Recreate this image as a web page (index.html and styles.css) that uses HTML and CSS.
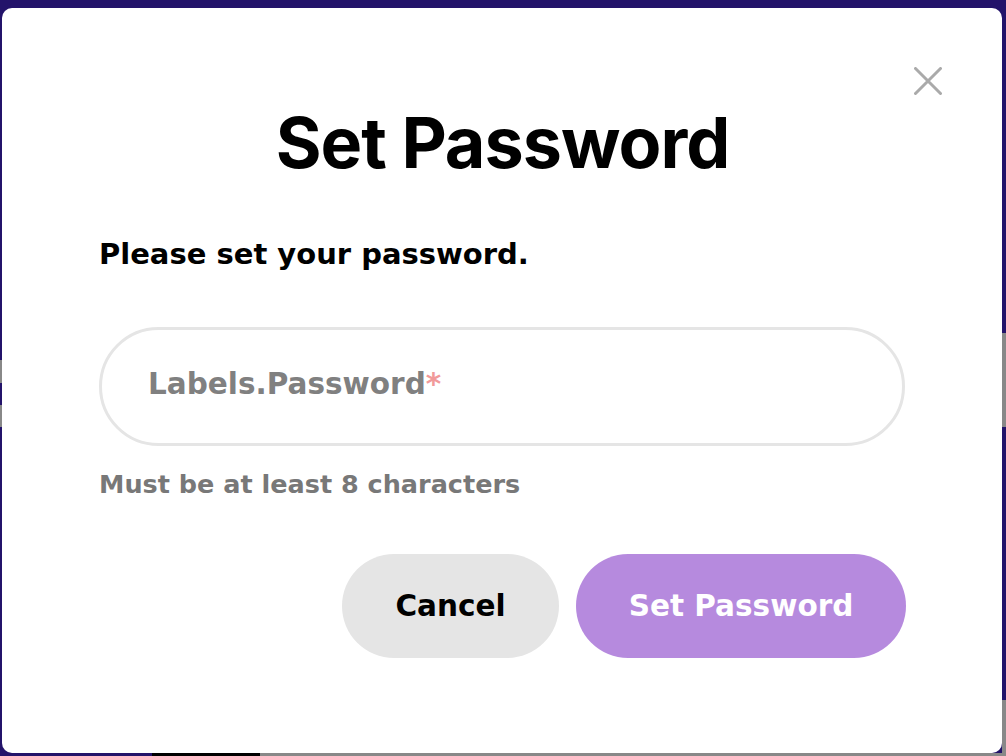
FILE: index.html
```html
<!DOCTYPE html>
<html lang="en">
<head>
<meta charset="utf-8">
<title>Set Password</title>
<link rel="stylesheet" href="styles.css">
</head>
<body>
<div class="modal" role="dialog" aria-labelledby="ttl">
  <button class="close" aria-label="Close">
    <svg width="28" height="28" viewBox="0 0 28 28"><path d="M1.5 1.5 L26.5 26.5 M26.5 1.5 L1.5 26.5" stroke="#aaaaaa" stroke-width="3" stroke-linecap="round" fill="none"/></svg>
  </button>
  <h1 class="title" id="ttl">Set Password</h1>
  <p class="lead">Please set your password.</p>
  <label class="field">
    <span class="placeholder">Labels.Password<span class="req">*</span></span>
  </label>
  <p class="hint">Must be at least 8 characters</p>
  <div class="actions">
    <button class="btn btn-cancel">Cancel</button>
    <button class="btn btn-primary">Set Password</button>
  </div>
</div>
</body>
</html>
```
FILE: styles.css
```css
* { box-sizing: border-box; }
html, body { height: 100%; }
body {
  margin: 0;
  padding: 8px 4px 3px 2px;
  font-family: "DejaVu Sans", Inter, sans-serif;
  background:
    linear-gradient(#888, #888) right 0 top 333px / 4px 94px no-repeat,
    linear-gradient(#888, #888) right 0 top 700px / 4px 56px no-repeat,
    linear-gradient(#888, #888) left 0 top 360px / 2px 23px no-repeat,
    linear-gradient(#888, #888) left 0 top 405px / 2px 22px no-repeat,
    linear-gradient(#000, #000) left 152px bottom 0 / 108px 3px no-repeat,
    linear-gradient(#888, #888) left 260px bottom 0 / 746px 3px no-repeat,
    #23136a;
  overflow: hidden;
}
.modal {
  position: relative;
  height: 745px;
  background: #fff;
  border-radius: 10px;
  padding: 100px 96px 0 97px;
  display: flex;
  flex-direction: column;
}
.close {
  position: absolute;
  top: 59px;
  right: 60px;
  width: 28px;
  height: 28px;
  padding: 0;
  border: 0;
  background: none;
  display: flex;
}
.title {
  margin: 0;
  text-align: center;
  font-family: Inter, "DejaVu Sans", sans-serif;
  font-size: 70px;
  line-height: 70px;
  font-weight: 700;
  letter-spacing: -1px;
  color: #000;
}
.lead {
  margin: 58px 0 0;
  font-size: 29px;
  line-height: 36px;
  font-weight: 700;
  color: #000;
}
.field {
  margin: 55px 1px 0 0;
  height: 119px;
  border: 3px solid #e5e5e5;
  border-radius: 60px;
  display: flex;
  align-items: center;
  padding: 0 0 6px 46px;
}
.placeholder {
  font-size: 29.5px;
  font-weight: 700;
  color: #808080;
}
.req { color: #f19a9a; }
.hint {
  margin: 22px 0 0;
  font-size: 25.5px;
  line-height: 32px;
  font-weight: 700;
  color: #787878;
}
.actions {
  margin-top: 54px;
  display: flex;
  justify-content: flex-end;
  gap: 17px;
}
.btn {
  height: 104px;
  border: 0;
  border-radius: 52px;
  font-family: inherit;
  font-size: 29.5px;
  font-weight: 700;
  padding: 0;
}
.btn-cancel {
  width: 217px;
  background: #e5e5e5;
  color: #000;
}
.btn-primary {
  width: 330px;
  background: #b68ade;
  color: #fff;
}
```
